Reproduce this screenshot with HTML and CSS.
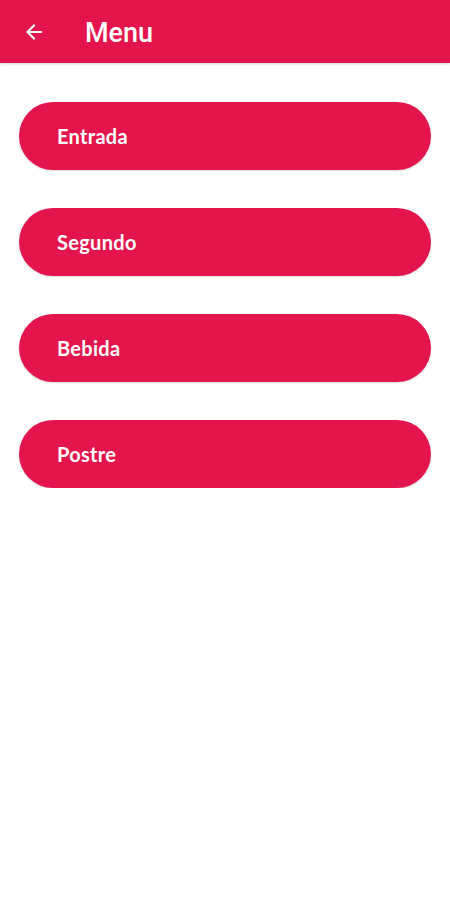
FILE: index.html
```html
<!DOCTYPE html>
<html lang="es">
<head>
    <meta charset="UTF-8">
    <meta name="viewport" content="width=device-width, initial-scale=1.0">
    <title>Menu</title>
    <link rel="stylesheet" href="styles.css">
</head>
<body>
    <div class="toolbar">
        <div class="back">
            <svg width="24" height="24" viewBox="0 0 24 24">
                <path d="M20 11H7.83l5.59-5.59L12 4l-8 8 8 8 1.41-1.41L7.83 13H20v-2z" fill="#fff"/>
            </svg>
        </div>
        <div class="title">Menu</div>
    </div>
    <ul class="list">
        <li class="item">Entrada</li>
        <li class="item">Segundo</li>
        <li class="item">Bebida</li>
        <li class="item">Postre</li>
    </ul>
</body>
</html>
```

FILE: styles.css
```css
* {
    margin: 0;
    padding: 0;
    list-style: none;
}
body {
    background: #fff;
    font-family: Roboto, "Noto Sans", sans-serif;
}
.toolbar {
    height: 63px;
    background: #e3154c;
    display: flex;
    align-items: center;
    box-shadow: 0 1px 3px rgba(0, 0, 0, 0.2);
}
.back {
    width: 24px;
    height: 24px;
    margin-left: 22px;
    display: flex;
}
.title {
    margin-left: 39px;
    color: #fff;
    font-size: 27px;
    font-weight: 500;
    padding-top: 3px;
}
.list {
    padding: 39px 19px 0;
    display: flex;
    flex-direction: column;
    gap: 38px;
}
.item {
    height: 68px;
    border-radius: 34px;
    background: #e3154c;
    color: #fff;
    font-family: Lato, "Noto Sans", sans-serif;
    font-weight: 700;
    font-size: 20px;
    letter-spacing: 0.3px;
    display: flex;
    align-items: center;
    padding-left: 38px;
    box-shadow: 0 1px 2px rgba(0, 0, 0, 0.15);
}
```
